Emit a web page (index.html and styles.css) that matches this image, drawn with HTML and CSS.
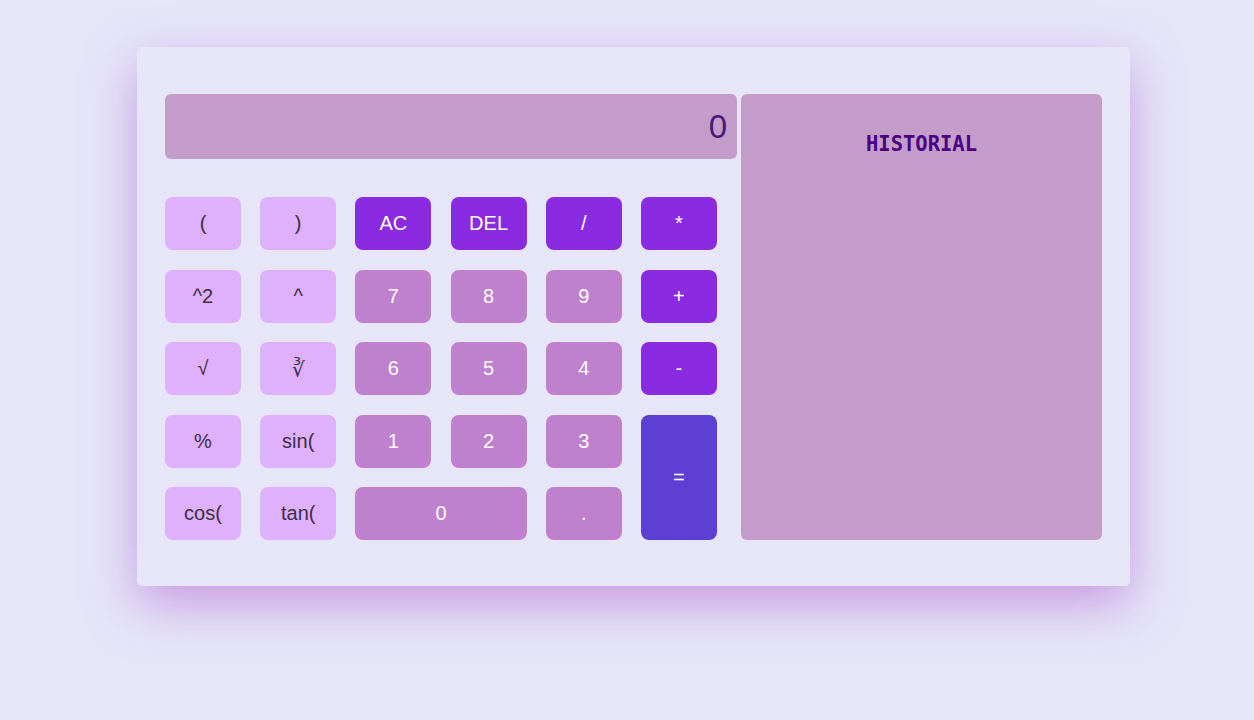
FILE: index.html
```html
<!DOCTYPE html>
<html lang="es">
<head>
<meta charset="utf-8">
<title>Calculadora</title>
<link rel="stylesheet" href="styles.css">
</head>
<body>
<div class="calc">
  <div class="main">
    <div class="display">0</div>
    <div class="keys">
      <button class="key fn">(</button>
      <button class="key fn">)</button>
      <button class="key op">AC</button>
      <button class="key op">DEL</button>
      <button class="key op">/</button>
      <button class="key op">*</button>

      <button class="key fn">^2</button>
      <button class="key fn">^</button>
      <button class="key num">7</button>
      <button class="key num">8</button>
      <button class="key num">9</button>
      <button class="key op">+</button>

      <button class="key fn">√</button>
      <button class="key fn">∛</button>
      <button class="key num">6</button>
      <button class="key num">5</button>
      <button class="key num">4</button>
      <button class="key op">-</button>

      <button class="key fn">%</button>
      <button class="key fn">sin(</button>
      <button class="key num">1</button>
      <button class="key num">2</button>
      <button class="key num">3</button>
      <button class="key eq">=</button>

      <button class="key fn">cos(</button>
      <button class="key fn">tan(</button>
      <button class="key num zero">0</button>
      <button class="key num">.</button>
    </div>
  </div>
  <div class="history">
    <h2 class="history-title">HISTORIAL</h2>
  </div>
</div>
</body>
</html>
```

FILE: styles.css
```css
html, body {
  margin: 0;
  padding: 0;
}
body {
  background: #e6e6fa;
  font-family: "Liberation Sans", Arial, sans-serif;
  height: 720px;
}
.calc {
  box-sizing: border-box;
  width: 993px;
  margin: 47px 0 0 137px;
  padding: 47px 28px 46px 28px;
  background: #e6e6f8;
  border-radius: 5px;
  box-shadow: 0 18px 50px rgba(170, 80, 200, 0.5);
  display: flex;
  gap: 4px;
}
.main {
  width: 572px;
  display: flex;
  flex-direction: column;
}
.display {
  box-sizing: border-box;
  height: 65px;
  background: #c49cc9;
  border-radius: 6px;
  color: #4a1a78;
  font-size: 33px;
  line-height: 65px;
  text-align: right;
  padding-right: 10px;
}
.keys {
  margin-top: 38px;
  display: grid;
  grid-template-columns: repeat(6, 76px);
  grid-auto-rows: 53px;
  column-gap: 19.2px;
  row-gap: 19.5px;
}
.key {
  border: none;
  border-radius: 8px;
  font-family: "Liberation Sans", Arial, sans-serif;
  font-size: 20px;
  padding: 0;
  cursor: pointer;
}
.fn {
  background: #dfb0fb;
  color: #3b2f48;
}
.op {
  background: #8a2be2;
  color: #ffffff;
}
.num {
  background: #bf80ce;
  color: #ffffff;
}
.eq {
  background: #5d3fd3;
  color: #ffffff;
  grid-row: span 2;
}
.zero {
  grid-column: span 2;
}
.history {
  width: 361px;
  height: 446px;
  background: #c49cc9;
  border-radius: 6px;
}
.history-title {
  margin: 38px 0 0 0;
  text-align: center;
  font-family: "DejaVu Sans Mono", monospace;
  font-weight: bold;
  font-size: 20.5px;
  line-height: 24px;
  color: #4b0082;
}
```
